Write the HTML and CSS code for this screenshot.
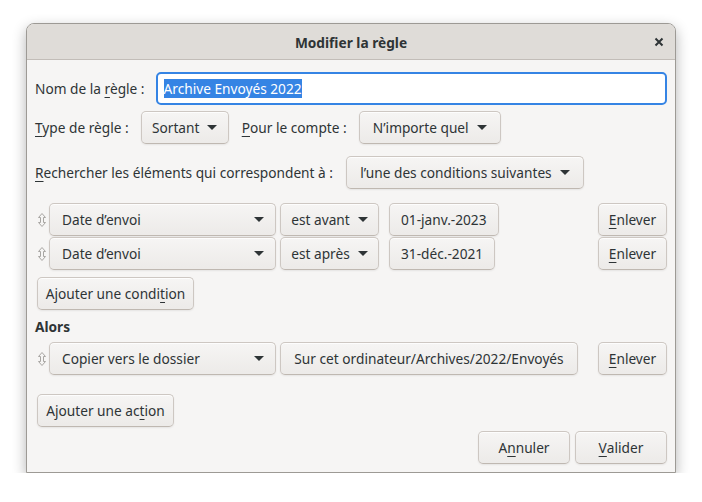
FILE: index.html
```html
<!DOCTYPE html>
<html lang="fr">
<head>
  <meta charset="UTF-8">
  <title>Modifier la règle</title>
  <link rel="stylesheet" href="styles.css">
</head>
<body>
  <div class="window">
    <div class="titlebar">
      <span></span>
      <span class="title">Modifier la règle</span>
      <button class="close" title="Fermer">
        <svg width="10" height="10" viewBox="0 0 10 10"><path d="M1.5 1.5 L8.5 8.5 M8.5 1.5 L1.5 8.5" stroke="#2e3436" stroke-width="2"/></svg>
      </button>
    </div>

    <div class="content">
      <div class="row name-row">
        <label>Nom de la <u>r</u>ègle :</label>
        <div class="entry"><span class="selected">Archive Envoyés 2022</span></div>
      </div>

      <div class="row type-row">
        <label><u>T</u>ype de règle :</label>
        <button class="button menu sortant">Sortant <span class="arrow"></span></button>
        <label><u>P</u>our le compte :</label>
        <button class="button menu account">N’importe quel <span class="arrow"></span></button>
      </div>

      <div class="row search-row">
        <label><u>R</u>echercher les éléments qui correspondent à :</label>
        <button class="button menu match">l’une des conditions suivantes <span class="arrow"></span></button>
      </div>

      <div class="rules">
        <div class="rule">
          <span class="handle"><svg width="8" height="14" viewBox="0 0 8 14"><path d="M4 0.5 L7.5 4.5 L5.5 4.5 L5.5 9.5 L7.5 9.5 L4 13.5 L0.5 9.5 L2.5 9.5 L2.5 4.5 L0.5 4.5 Z" fill="none" stroke="#a8a6a3"/></svg></span>
          <button class="button combo field">Date d’envoi <span class="arrow"></span></button>
          <button class="button menu op">est avant <span class="arrow"></span></button>
          <button class="button value">01-janv.-2023</button>
          <button class="button remove"><u>E</u>nlever</button>
        </div>
        <div class="rule">
          <span class="handle"><svg width="8" height="14" viewBox="0 0 8 14"><path d="M4 0.5 L7.5 4.5 L5.5 4.5 L5.5 9.5 L7.5 9.5 L4 13.5 L0.5 9.5 L2.5 9.5 L2.5 4.5 L0.5 4.5 Z" fill="none" stroke="#a8a6a3"/></svg></span>
          <button class="button combo field">Date d’envoi <span class="arrow"></span></button>
          <button class="button menu op">est après <span class="arrow"></span></button>
          <button class="button value">31-déc.-2021</button>
          <button class="button remove"><u>E</u>nlever</button>
        </div>
      </div>

      <button class="button add add-condition">Ajouter une condi<u>t</u>ion</button>

      <div class="section-title">Alors</div>

      <div class="rules actions">
        <div class="rule">
          <span class="handle"><svg width="8" height="14" viewBox="0 0 8 14"><path d="M4 0.5 L7.5 4.5 L5.5 4.5 L5.5 9.5 L7.5 9.5 L4 13.5 L0.5 9.5 L2.5 9.5 L2.5 4.5 L0.5 4.5 Z" fill="none" stroke="#a8a6a3"/></svg></span>
          <button class="button combo field">Copier vers le dossier <span class="arrow"></span></button>
          <button class="button folder">Sur cet ordinateur/Archives/2022/Envoyés</button>
          <button class="button remove"><u>E</u>nlever</button>
        </div>
      </div>

      <button class="button add add-action">Ajouter une ac<u>t</u>ion</button>

      <div class="dialog-buttons">
        <button class="button cancel">A<u>n</u>nuler</button>
        <button class="button ok"><u>V</u>alider</button>
      </div>
    </div>
  </div>
</body>
</html>
```

FILE: styles.css
```css
body {
  margin: 0;
  background: #ffffff;
  font-family: "Noto Sans", "DejaVu Sans", sans-serif;
  font-size: 13.7px;
  color: #2e3436;
}

.window {
  margin: 23px 0 0 26px;
  width: 650px;
  box-sizing: border-box;
  border: 1px solid #9d9a95;
  border-radius: 8px 8px 0 0;
  background: #f6f5f4;
  box-shadow: 0 5px 14px rgba(0, 0, 0, 0.3);
}

/* header bar */
.titlebar {
  display: grid;
  grid-template-columns: 1fr auto 1fr;
  align-items: center;
  height: 35px;
  border-bottom: 1px solid #c2bdb8;
  border-radius: 7px 7px 0 0;
  background: #dfdcd8;
}
.title {
  font-weight: bold;
  padding-top: 1px;
}
.close {
  justify-self: end;
  margin-right: 11px;
  padding: 0;
  border: 0;
  background: none;
  display: flex;
}

.content {
  display: flex;
  flex-direction: column;
  align-items: flex-start;
  padding: 0 8px 8px;
}

.row {
  display: flex;
  align-items: center;
  align-self: stretch;
}

u {
  text-decoration: underline;
  text-underline-offset: 3px;
  text-decoration-thickness: 1px;
}

/* buttons */
.button {
  display: inline-flex;
  align-items: center;
  justify-content: center;
  box-sizing: border-box;
  height: 33px;
  padding: 0 12px;
  font: inherit;
  color: #2e3436;
  border: 1px solid #cdc7c2;
  border-bottom-color: #bfb8b1;
  border-radius: 5px;
  background: linear-gradient(to top, #edebe9 2px, #f6f5f4);
  box-shadow: inset 0 1px rgba(255, 255, 255, 0.8), 0 1px 2px rgba(0, 0, 0, 0.07);
  white-space: nowrap;
}
.arrow {
  display: inline-block;
  width: 0;
  height: 0;
  margin-left: 8px;
  border-left: 5px solid transparent;
  border-right: 5px solid transparent;
  border-top: 5px solid #2e3436;
}
.combo {
  justify-content: space-between;
}
.combo .arrow {
  margin-right: -1px;
}

/* name entry */
.name-row {
  margin-top: 12px;
  gap: 11px;
}
.entry {
  flex: 1;
  box-sizing: border-box;
  height: 33px;
  display: flex;
  align-items: center;
  padding: 0 6px;
  border: 2px solid #3584e4;
  border-radius: 5px;
  background: #ffffff;
}
.selected {
  background: #3584e4;
  color: #ffffff;
  line-height: 19px;
}

.type-row {
  margin-top: 6px;
  gap: 12px;
}
.sortant {
  width: 88px;
  margin-right: 1px;
}
.account {
  width: 142px;
}

.search-row {
  margin-top: 12px;
  gap: 13px;
}
.match {
  width: 238px;
}

/* conditions and actions */
.rules {
  align-self: stretch;
  display: flex;
  flex-direction: column;
  gap: 1px;
  margin-top: 14px;
}
.rule {
  display: flex;
  align-items: center;
}
.handle {
  width: 14px;
  display: flex;
  justify-content: center;
}
.field {
  width: 227px;
}
.op {
  width: 99px;
  margin-left: 4px;
  padding: 0 10px;
}
.value {
  margin-left: 10px;
  padding: 0 11px;
}
.remove {
  margin-left: auto;
  width: 69px;
}
.folder {
  margin-left: 4px;
  width: 298px;
}

.add {
  margin-left: 2px;
}
.add-condition {
  margin-top: 7px;
  width: 157px;
}
.section-title {
  margin-top: 7px;
  font-weight: bold;
  line-height: 20px;
}
.actions {
  margin-top: 5px;
}
.add-action {
  margin-top: 19px;
  width: 137px;
}

.dialog-buttons {
  align-self: flex-end;
  display: flex;
  gap: 5px;
  margin-top: 4px;
}
.cancel {
  width: 92px;
}
.ok {
  width: 92px;
}
```
